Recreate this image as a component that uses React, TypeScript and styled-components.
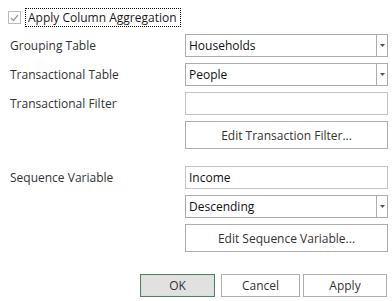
import styled, { createGlobalStyle } from "styled-components";

const GlobalStyle = createGlobalStyle`
  body {
    margin: 0;
    background: #ffffff;
    font-family: "Open Sans", "Noto Sans", sans-serif;
    font-size: 12px;
    color: #000;
  }
`;

const Dialog = styled.div`
  width: 392px;
  height: 301px;
  box-sizing: border-box;
  padding: 8px 5px 0 8px;
  background: #ffffff;
`;

const CheckRow = styled.label`
  display: flex;
  align-items: center;
  gap: 4px;
  height: 19px;
`;

const CheckBox = styled.span`
  width: 11px;
  height: 11px;
  border: 1px solid #bcbcbc;
  background: #fff;
  display: flex;
  align-items: center;
  justify-content: center;
`;

const FocusText = styled.span`
  border: 1px dotted #000;
  padding: 0 3px 0 2px;
  line-height: 17px;
  color: #1a1a1a;
`;

const Form = styled.div`
  display: flex;
  flex-direction: column;
  margin-top: 7px;
  padding-left: 2px;
`;

const Row = styled.div<{ $top?: number }>`
  display: grid;
  grid-template-columns: 175px 203px;
  margin-top: ${(p) => p.$top ?? 0}px;
`;

const Label = styled.span`
  line-height: 23px;
  color: #333;
`;

const Fields = styled.div`
  display: flex;
  flex-direction: column;
  gap: 6px;
`;

const TextBox = styled.div`
  height: 23px;
  box-sizing: border-box;
  border: 1px solid #c4c4c4;
  padding-left: 3px;
  line-height: 21px;
  background: #fff;
  color: #111;
`;

const Combo = styled.div`
  height: 23px;
  box-sizing: border-box;
  border: 1px solid #acacac;
  display: flex;
  background: #fff;
`;

const ComboText = styled.span`
  flex: 1;
  padding-left: 3px;
  line-height: 21px;
  color: #111;
`;

const ComboArrow = styled.span`
  width: 10px;
  border-left: 1px solid #acacac;
  display: flex;
  align-items: center;
  justify-content: center;
`;

const Button = styled.button<{ $tall?: boolean; $w?: number; $ml?: number; $default?: boolean }>`
  height: ${(p) => (p.$tall ? 28 : 23)}px;
  width: ${(p) => (p.$w ? `${p.$w}px` : "100%")};
  margin-left: ${(p) => p.$ml ?? 0}px;
  box-sizing: border-box;
  border: 1px solid ${(p) => (p.$default ? "#5c7a68" : "#adadad")};
  background: ${(p) => (p.$default ? "#e1e1e1" : "#ffffff")};
  box-shadow: ${(p) => (p.$default ? "inset 0 0 0 1px #cde6d6" : "none")};
  font-family: inherit;
  font-size: 12px;
  color: #333;
  padding: 0;
`;

const Footer = styled.div`
  display: flex;
  justify-content: flex-end;
  margin-top: 22px;
`;

const Arrow = () => (
  <svg width="5" height="3" viewBox="0 0 5 3">
    <path d="M0 0H5L2.5 3Z" fill="#555" />
  </svg>
);

const Check = () => (
  <svg width="9" height="8" viewBox="0 0 9 8">
    <path d="M1 4L3.5 6.5L8 1" stroke="#9a9a9a" strokeWidth="1.3" fill="none" />
  </svg>
);

const App = () => {
  return (
    <Dialog>
      <GlobalStyle />
      <CheckRow>
        <CheckBox>
          <Check />
        </CheckBox>
        <FocusText>Apply Column Aggregation</FocusText>
      </CheckRow>
      <Form>
        <Row>
          <Label>Grouping Table</Label>
          <Combo>
            <ComboText>Households</ComboText>
            <ComboArrow>
              <Arrow />
            </ComboArrow>
          </Combo>
        </Row>
        <Row $top={6}>
          <Label>Transactional Table</Label>
          <Combo>
            <ComboText>People</ComboText>
            <ComboArrow>
              <Arrow />
            </ComboArrow>
          </Combo>
        </Row>
        <Row $top={6}>
          <Label>Transactional Filter</Label>
          <Fields>
            <TextBox />
            <Button $tall>Edit Transaction Filter...</Button>
          </Fields>
        </Row>
        <Row $top={17}>
          <Label>Sequence Variable</Label>
          <Fields>
            <TextBox>Income</TextBox>
            <Combo>
              <ComboText>Descending</ComboText>
              <ComboArrow>
                <Arrow />
              </ComboArrow>
            </Combo>
            <Button $tall>Edit Sequence Variable...</Button>
          </Fields>
        </Row>
      </Form>
      <Footer>
        <Button $w={75} $default>
          OK
        </Button>
        <Button $w={79} $ml={6}>
          Cancel
        </Button>
        <Button $w={84} $ml={3}>
          Apply
        </Button>
      </Footer>
    </Dialog>
  );
};

export default App;
